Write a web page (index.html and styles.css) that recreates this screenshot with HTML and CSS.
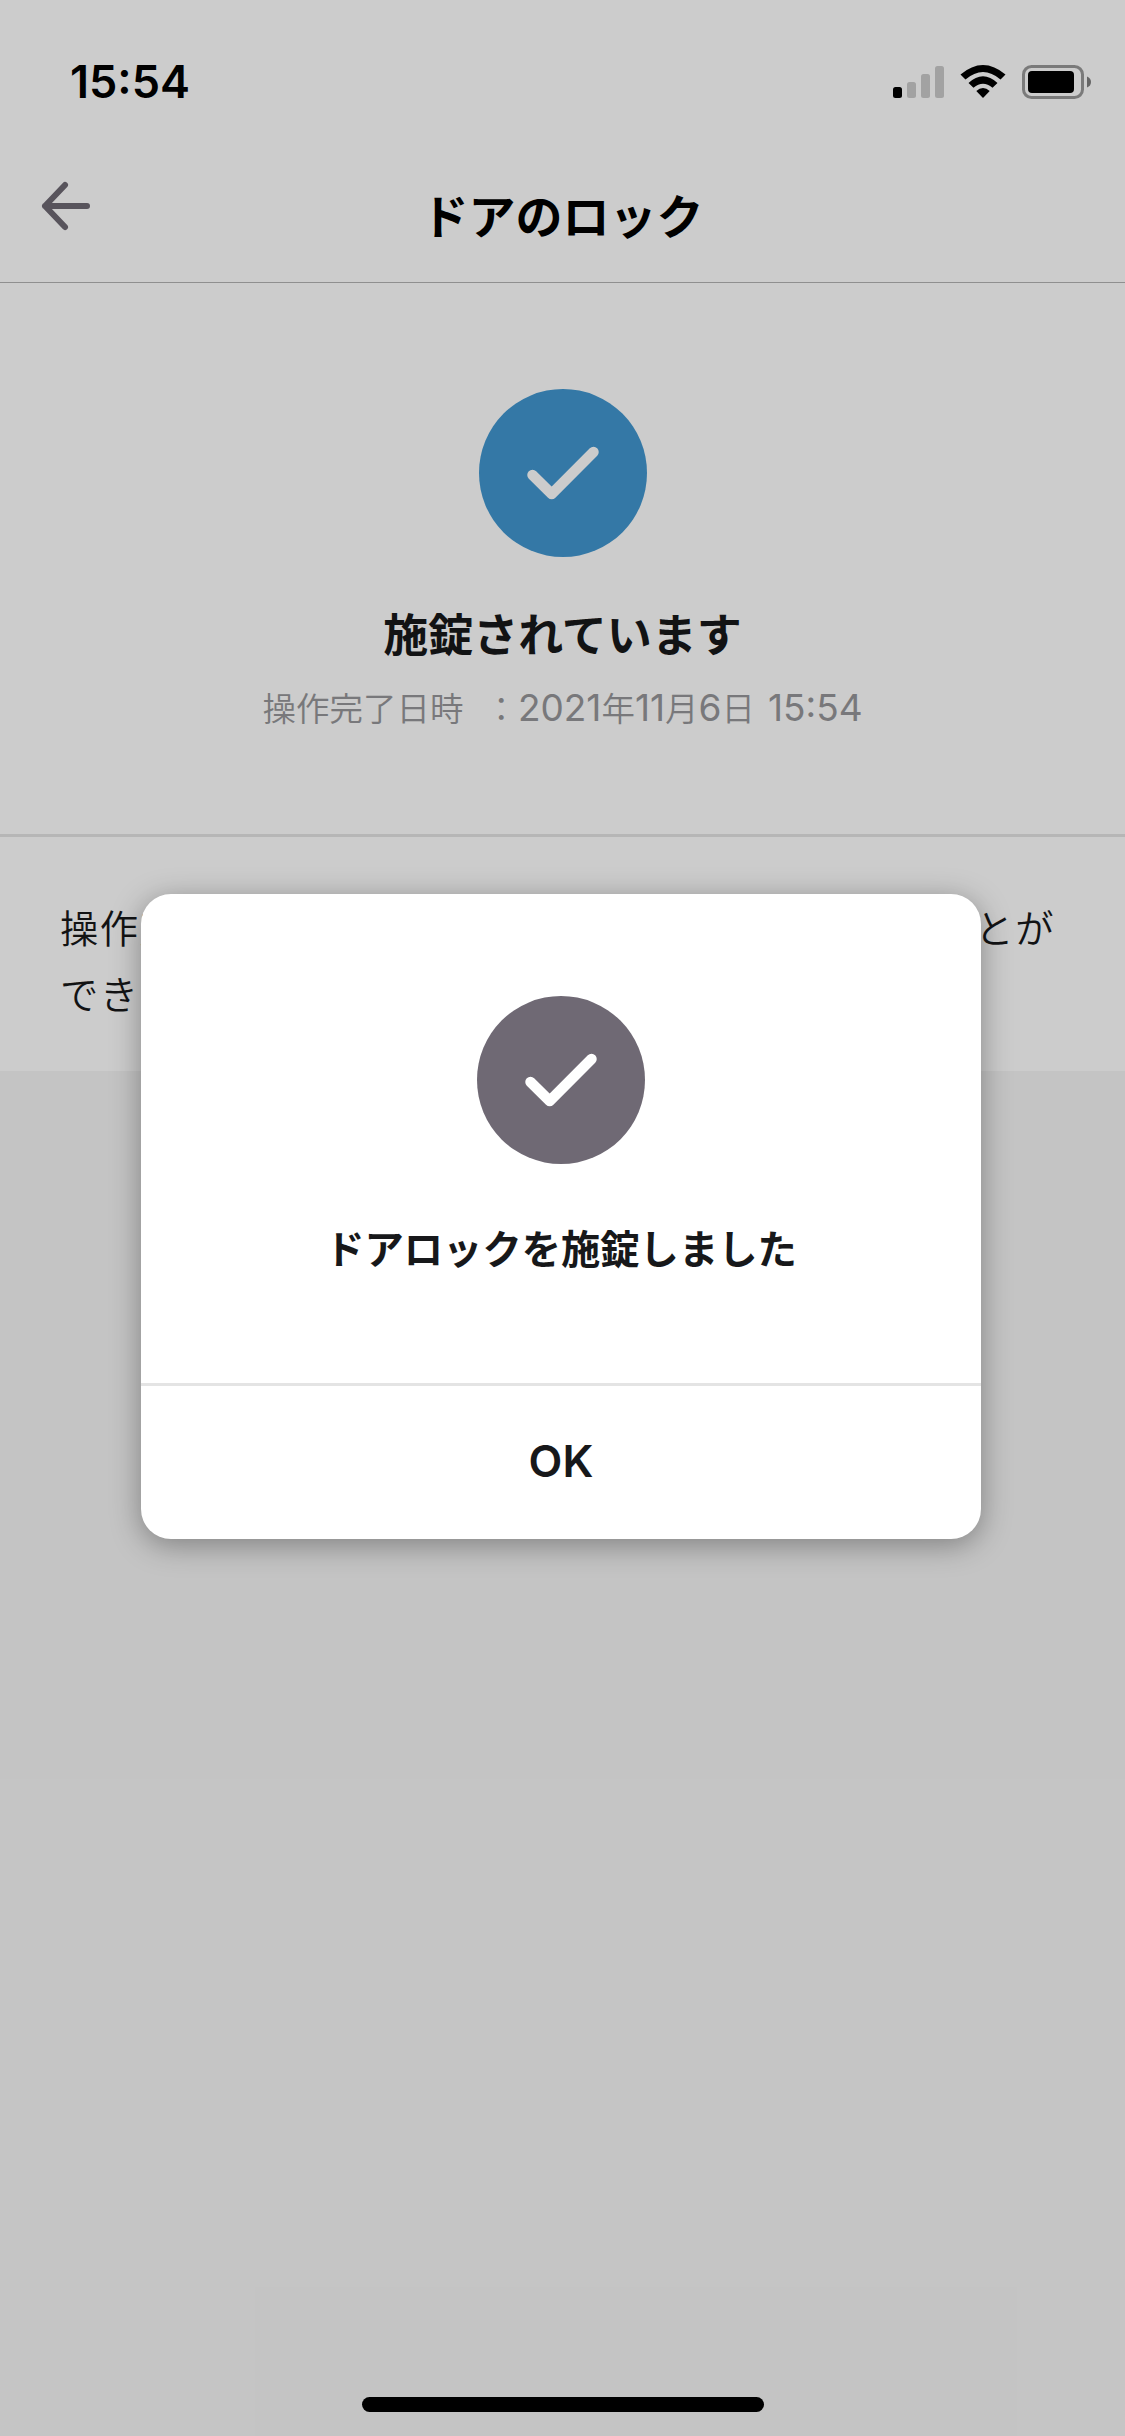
FILE: index.html
```
<!DOCTYPE html>
<html lang="ja">

<head>
    <meta charset="UTF-8">
    <meta name="viewport" content="width=device-width, initial-scale=1.0">
    <title>ドアのロック</title>
    <link rel="stylesheet" href="styles.css">
</head>

<body>
    <div class="screen">
        <div class="status-bar">
            <span class="time">15:54</span>
            <svg class="status-icons" width="200" height="36" viewBox="0 0 200 36">
                <!-- signal -->
                <rect x="1" y="23" width="9" height="11" rx="2.5" />
                <g opacity="0.2">
                    <rect x="15" y="18" width="9" height="16" rx="2.5" />
                    <rect x="29" y="10" width="9" height="24" rx="2.5" />
                    <rect x="43" y="2" width="9" height="32" rx="2.5" />
                </g>
                <!-- wifi -->
                <path d="M68.500 10.500Q91 -8.500 113.500 10.500L108.500 15.500Q91 .5 73.500 15.500Z" />
                <path d="M76.500 19Q91 5.500 105.500 19L100.500 23.800Q91 15.500 81.500 23.800Z" />
                <path d="M84.300 27Q91 21 97.700 27L91 34Z" />
                <!-- battery -->
                <rect x="131.500" y="2.500" width="59" height="31" rx="8" fill="none" stroke="#000" stroke-width="3" opacity="0.4" />
                <rect x="136" y="7" width="46" height="22" rx="4" />
                <path d="M195 12.500Q199 14 199 18T195 23.500Z" opacity="0.5" />
            </svg>
        </div>
        <header class="header">
            <svg class="back" width="54" height="54" viewBox="0 0 54 54">
                <path d="M26 6L6 27L26 48M6 27H48" />
            </svg>
            <h1>ドアのロック</h1>
        </header>
        <section class="state">
            <svg class="check check-blue" width="168" height="168" viewBox="0 0 168 168">
                <circle cx="84" cy="84" r="84" />
                <path d="M53.500 86L72.700 105L114.500 63" />
            </svg>
            <h2>施錠されています</h2>
            <p class="date">操作完了日時<span class="colon">：</span><b>2021</b>年<b>11</b>月<b>6</b>日<b class="clock">15:54</b></p>
        </section>
        <section class="note">
            <p>操作完了後、アプリのトップ画面から状態を見ることが<br>できます。</p>
        </section>
    </div>

    <div class="overlay">
        <div class="modal">
            <div class="modal-body">
                <svg class="check check-gray" width="168" height="168" viewBox="0 0 168 168">
                    <circle cx="84" cy="84" r="84" />
                    <path d="M53.500 86L72.700 105L114.500 63" />
                </svg>
                <p class="message">ドアロックを施錠しました</p>
            </div>
            <button class="ok">OK</button>
        </div>
    </div>
    <div class="home-indicator"></div>
</body>

</html>
```

FILE: styles.css
```
* {
    box-sizing: border-box;
    margin: 0;
    padding: 0;
}

body {
    width: 1125px;
    height: 2436px;
    overflow: hidden;
    font-family: Inter, "Noto Sans CJK JP", sans-serif;
    color: #17181a;
}

.screen {
    height: 2436px;
    background: #f6f6f6;
}

.status-bar {
    display: flex;
    justify-content: space-between;
    height: 132px;
    padding: 64px 33px 0 70px;
    background: #fff;
    color: #000;
}

.time {
    font-size: 45px;
    font-weight: 600;
    line-height: 36px;
}

.header {
    display: grid;
    grid-template-columns: 134px 1fr 134px;
    height: 151px;
    padding-top: 47px;
    background: #fff;
    border-bottom: 1px solid #b3b3b3;
    color: #000;
}

.back {
    margin-left: 39px;
    fill: none;
    stroke: #6f6974;
    stroke-width: 6;
    stroke-linecap: round;
    stroke-linejoin: round;
}

h1 {
    padding-top: 3px;
    font-size: 47px;
    font-weight: 700;
    line-height: 70px;
    text-align: center;
}

.state {
    display: flex;
    flex-direction: column;
    align-items: center;
    height: 554px;
    padding-top: 106px;
    background: #fff;
    border-bottom: 3px solid #e4e4e4;
}

.check path {
    fill: none;
    stroke: #fff;
    stroke-width: 10.5;
    stroke-linecap: round;
    stroke-linejoin: round;
}

.check-blue {
    fill: #4197d0;
}

.check-gray {
    fill: #6f6974;
}

h2 {
    margin-top: 47px;
    font-size: 45px;
    font-weight: 700;
    line-height: 64px;
}

.date {
    display: flex;
    align-items: baseline;
    margin-top: 16px;
    font-size: 33.5px;
    font-weight: 350;
    line-height: 48px;
    color: #97979a;
}

.date b {
    font-size: 37px;
    font-weight: 400;
}

.colon {
    margin-left: 21px;
}

.clock {
    margin-left: 13px;
}

.note {
    height: 234px;
    padding: 59px 0 0 60px;
    background: #fff;
}

.note p {
    font-size: 38.3px;
    font-weight: 350;
    line-height: 66px;
    letter-spacing: 1.5px;
    white-space: nowrap;
}

.overlay {
    position: absolute;
    top: 0;
    left: 0;
    width: 1125px;
    height: 2436px;
    padding: 894px 0 0 141px;
    background: rgba(0, 0, 0, 0.2);
}

.modal {
    display: flex;
    flex-direction: column;
    width: 840px;
    height: 645px;
    background: #fff;
    border-radius: 30px;
    box-shadow: 0 6px 30px rgba(0, 0, 0, 0.35);
}

.modal-body {
    display: flex;
    flex-direction: column;
    align-items: center;
    height: 489px;
    padding-top: 102px;
}

.message {
    margin-top: 56px;
    font-size: 39.3px;
    font-weight: 700;
    line-height: 60px;
}

.ok {
    flex: 1;
    padding-bottom: 3px;
    border: none;
    border-top: 3px solid #e4e4e4;
    background: none;
    font-family: inherit;
    font-size: 44px;
    font-weight: 600;
    color: #17181a;
}

.home-indicator {
    position: absolute;
    left: 362px;
    top: 2397px;
    width: 402px;
    height: 15px;
    border-radius: 8px;
    background: #000;
}
```
